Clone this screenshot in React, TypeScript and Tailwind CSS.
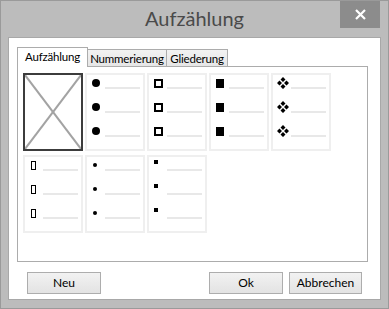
import type { ReactNode } from 'react'

const Dot = () => <span className="block w-[8px] h-[8px] rounded-full bg-black" />
const Box = () => <span className="block w-[9px] h-[9px] border-2 border-black" />
const Block = () => <span className="block w-[8px] h-[9px] bg-black" />
const Missing = () => <span className="block w-[5px] h-[9px] border border-black ml-[1px]" />
const SmallDot = () => <span className="block w-[4px] h-[4px] rounded-full bg-black ml-[1px]" />
const SmallSquare = () => <span className="block w-[4px] h-[4px] bg-black -mt-[6px]" />

const Diamonds = () => (
  <svg width="12" height="12" viewBox="0 0 12 12" className="block -ml-[1px]">
    <path d="M6 0L8.5 2.5L6 5L3.5 2.5Z M2.5 3.5L5 6L2.5 8.5L0 6Z M9.5 3.5L12 6L9.5 8.5L7 6Z M6 7L8.5 9.5L6 12L3.5 9.5Z" fill="black" />
  </svg>
)

function Cell({ bullet }: { bullet: ReactNode }) {
  return (
    <div className="w-[60px] h-[78px] border-2 border-[#efefef] flex flex-col gap-[8px]">
      {[0, 1, 2].map((i) => (
        <div key={i} className="h-[16px] flex items-center pl-[5px]">
          <span className="w-[13px] flex items-center">{bullet}</span>
          <span className="w-[35px] h-[2px] bg-[#e8e8e8] mt-[10px]" />
        </div>
      ))}
    </div>
  )
}

function NoneCell() {
  return (
    <div className="w-[60px] h-[78px] border-2 border-[#3c3c3c]">
      <svg width="56" height="74" viewBox="0 0 56 74" className="block">
        <line x1="0" y1="0" x2="56" y2="74" stroke="#a3a3a3" strokeWidth="2" />
        <line x1="56" y1="0" x2="0" y2="74" stroke="#a3a3a3" strokeWidth="2" />
      </svg>
    </div>
  )
}

const buttonCls =
  'h-[22px] border border-[#adadad] bg-gradient-to-b from-[#f2f2f2] to-[#e3e3e3] text-[12px] text-black flex items-center justify-center'

const tabCls =
  'h-[17px] border border-l-0 border-b-0 border-[#acacac] bg-gradient-to-b from-[#f2f2f2] to-[#e6e6e6] flex items-center justify-center pt-[2px]'

export default function App() {
  return (
    <div className="w-[389px] h-[309px] bg-[#bcbcbc] border border-[#9a9a9a] flex flex-col relative font-['Segoe_UI','Lato',sans-serif]">
      <div className="h-[36px] flex items-center justify-center text-[20px] text-[#4a4a4a] pb-[2px]">
        Aufzählung
      </div>
      <button className="absolute top-0 right-[8px] w-[40px] h-[27px] bg-[#8c8c8c] flex items-center justify-center">
        <svg width="11" height="11" viewBox="0 0 11 11">
          <path d="M1 1L10 10M10 1L1 10" stroke="white" strokeWidth="2.2" />
        </svg>
      </button>
      <div className="mx-[7px] mb-[8px] flex-1 bg-white border border-[#a8a8a8] flex flex-col pt-[8px] pl-[8px]">
        <div className="flex items-end h-[20px] text-[11.5px] tracking-[-0.2px] text-black">
          <div className="w-[71px] h-[20px] -mb-px relative z-10 bg-white border border-b-0 border-[#acacac] flex items-center justify-center pb-[1px]">
            Aufzählung
          </div>
          <div className={`${tabCls} w-[79px]`}>Nummerierung</div>
          <div className={`${tabCls} w-[61px]`}>Gliederung</div>
        </div>
        <div className="w-[351px] h-[196px] border border-[#acacac] pl-[5px] pt-[6px]">
          <div className="flex flex-wrap gap-x-[2px] gap-y-[4px] w-[310px]">
            <NoneCell />
            <Cell bullet={<Dot />} />
            <Cell bullet={<Box />} />
            <Cell bullet={<Block />} />
            <Cell bullet={<Diamonds />} />
            <Cell bullet={<Missing />} />
            <Cell bullet={<SmallDot />} />
            <Cell bullet={<SmallSquare />} />
          </div>
        </div>
        <div className="flex items-center mt-[10px] pl-[10px] pr-[18px]">
          <button className={`${buttonCls} w-[74px]`}>Neu</button>
          <button className={`${buttonCls} w-[74px] ml-auto`}>Ok</button>
          <button className={`${buttonCls} w-[73px] ml-[6px]`}>Abbrechen</button>
        </div>
      </div>
    </div>
  )
}
